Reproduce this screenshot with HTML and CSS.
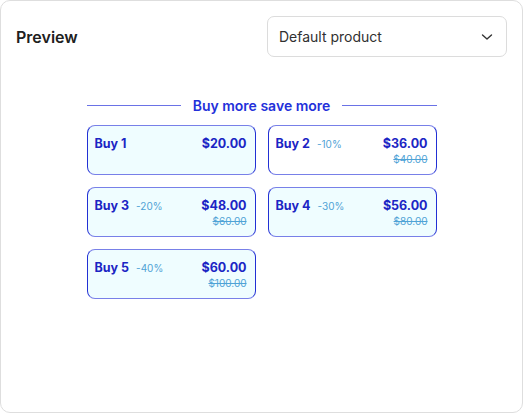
FILE: index.html
```html
<!DOCTYPE html>
<html>
<head>
<meta charset="utf-8">
<link rel="stylesheet" href="styles.css">
</head>
<body>
<div class="panel">
  <div class="header">
    <h1 class="title">Preview</h1>
    <div class="select">
      <span>Default product</span>
      <svg class="chev" width="12" height="12" viewBox="0 0 12 12"><path d="M1.5 4 L6 8 L10.5 4" fill="none" stroke="#333" stroke-width="1.4" stroke-linecap="round" stroke-linejoin="round"/></svg>
    </div>
  </div>
  <div class="bundle">
    <div class="heading"><span class="line"></span><span class="htext">Buy more save more</span><span class="line"></span></div>
    <div class="grid">
      <div class="card">
        <div class="left"><span class="name">Buy 1</span></div>
        <div class="right"><span class="price">$20.00</span></div>
      </div>
      <div class="card white">
        <div class="left"><span class="name">Buy 2</span><span class="off">-10%</span></div>
        <div class="right"><span class="price">$36.00</span><span class="old">$40.00</span></div>
      </div>
      <div class="card">
        <div class="left"><span class="name">Buy 3</span><span class="off">-20%</span></div>
        <div class="right"><span class="price">$48.00</span><span class="old">$60.00</span></div>
      </div>
      <div class="card">
        <div class="left"><span class="name">Buy 4</span><span class="off">-30%</span></div>
        <div class="right"><span class="price">$56.00</span><span class="old">$80.00</span></div>
      </div>
      <div class="card">
        <div class="left"><span class="name">Buy 5</span><span class="off">-40%</span></div>
        <div class="right"><span class="price">$60.00</span><span class="old">$100.00</span></div>
      </div>
    </div>
  </div>
</div>
</body>
</html>
```

FILE: styles.css
```css
html, body { margin: 0; padding: 0; background: #fff; }
body { font-family: Inter, "Noto Sans", sans-serif; width: 524px; height: 414px; overflow: hidden; }
.panel {
  box-sizing: border-box;
  width: 523px;
  height: 413px;
  border: 1px solid #dedede;
  border-radius: 10px;
  background: #fff;
  padding: 15px 15px 0 15px;
}
.header { display: flex; justify-content: space-between; align-items: center; }
.title { margin: 0; font-size: 16px; font-weight: 600; color: #202020; letter-spacing: 0; }
.select {
  box-sizing: border-box;
  width: 240px; height: 41px;
  border: 1px solid #dcdcdc; border-radius: 7px;
  display: flex; align-items: center; justify-content: space-between;
  padding: 0 13px 0 11px;
  font-size: 14px; color: #303030;
}
.chev { display: block; }
.bundle { width: 350px; margin: 38px auto 0 auto; }
.heading { display: flex; align-items: center; gap: 12px; height: 20px; }
.line { flex: 1; height: 1px; background: #6a72e6; }
.htext { font-size: 14px; font-weight: 600; color: #2330da; }
.grid { display: grid; grid-template-columns: 169px 169px; column-gap: 12px; row-gap: 12px; margin-top: 10px; }
.card {
  box-sizing: border-box;
  height: 50px;
  border: 1px solid #2230d4;
  border-top-color: #7880e8; border-bottom-color: #7880e8;
  border-radius: 8px;
  background: #effdff;
  padding: 10px 8px 0 7px;
  display: flex; justify-content: space-between; align-items: flex-start;
}
.card.white { background: #fff; }
.left { display: flex; align-items: baseline; gap: 7px; }
.name { font-size: 12.5px; font-weight: 700; color: #1c25c4; line-height: 16px; }
.off { font-size: 10px; color: #4fa3d6; }
.right { display: flex; flex-direction: column; align-items: flex-end; }
.price { font-size: 12.5px; font-weight: 700; color: #1c25c4; line-height: 16px; }
.old { font-size: 10px; color: #4fa3d6; text-decoration: line-through; line-height: 14px; margin-top: 0; }
```
